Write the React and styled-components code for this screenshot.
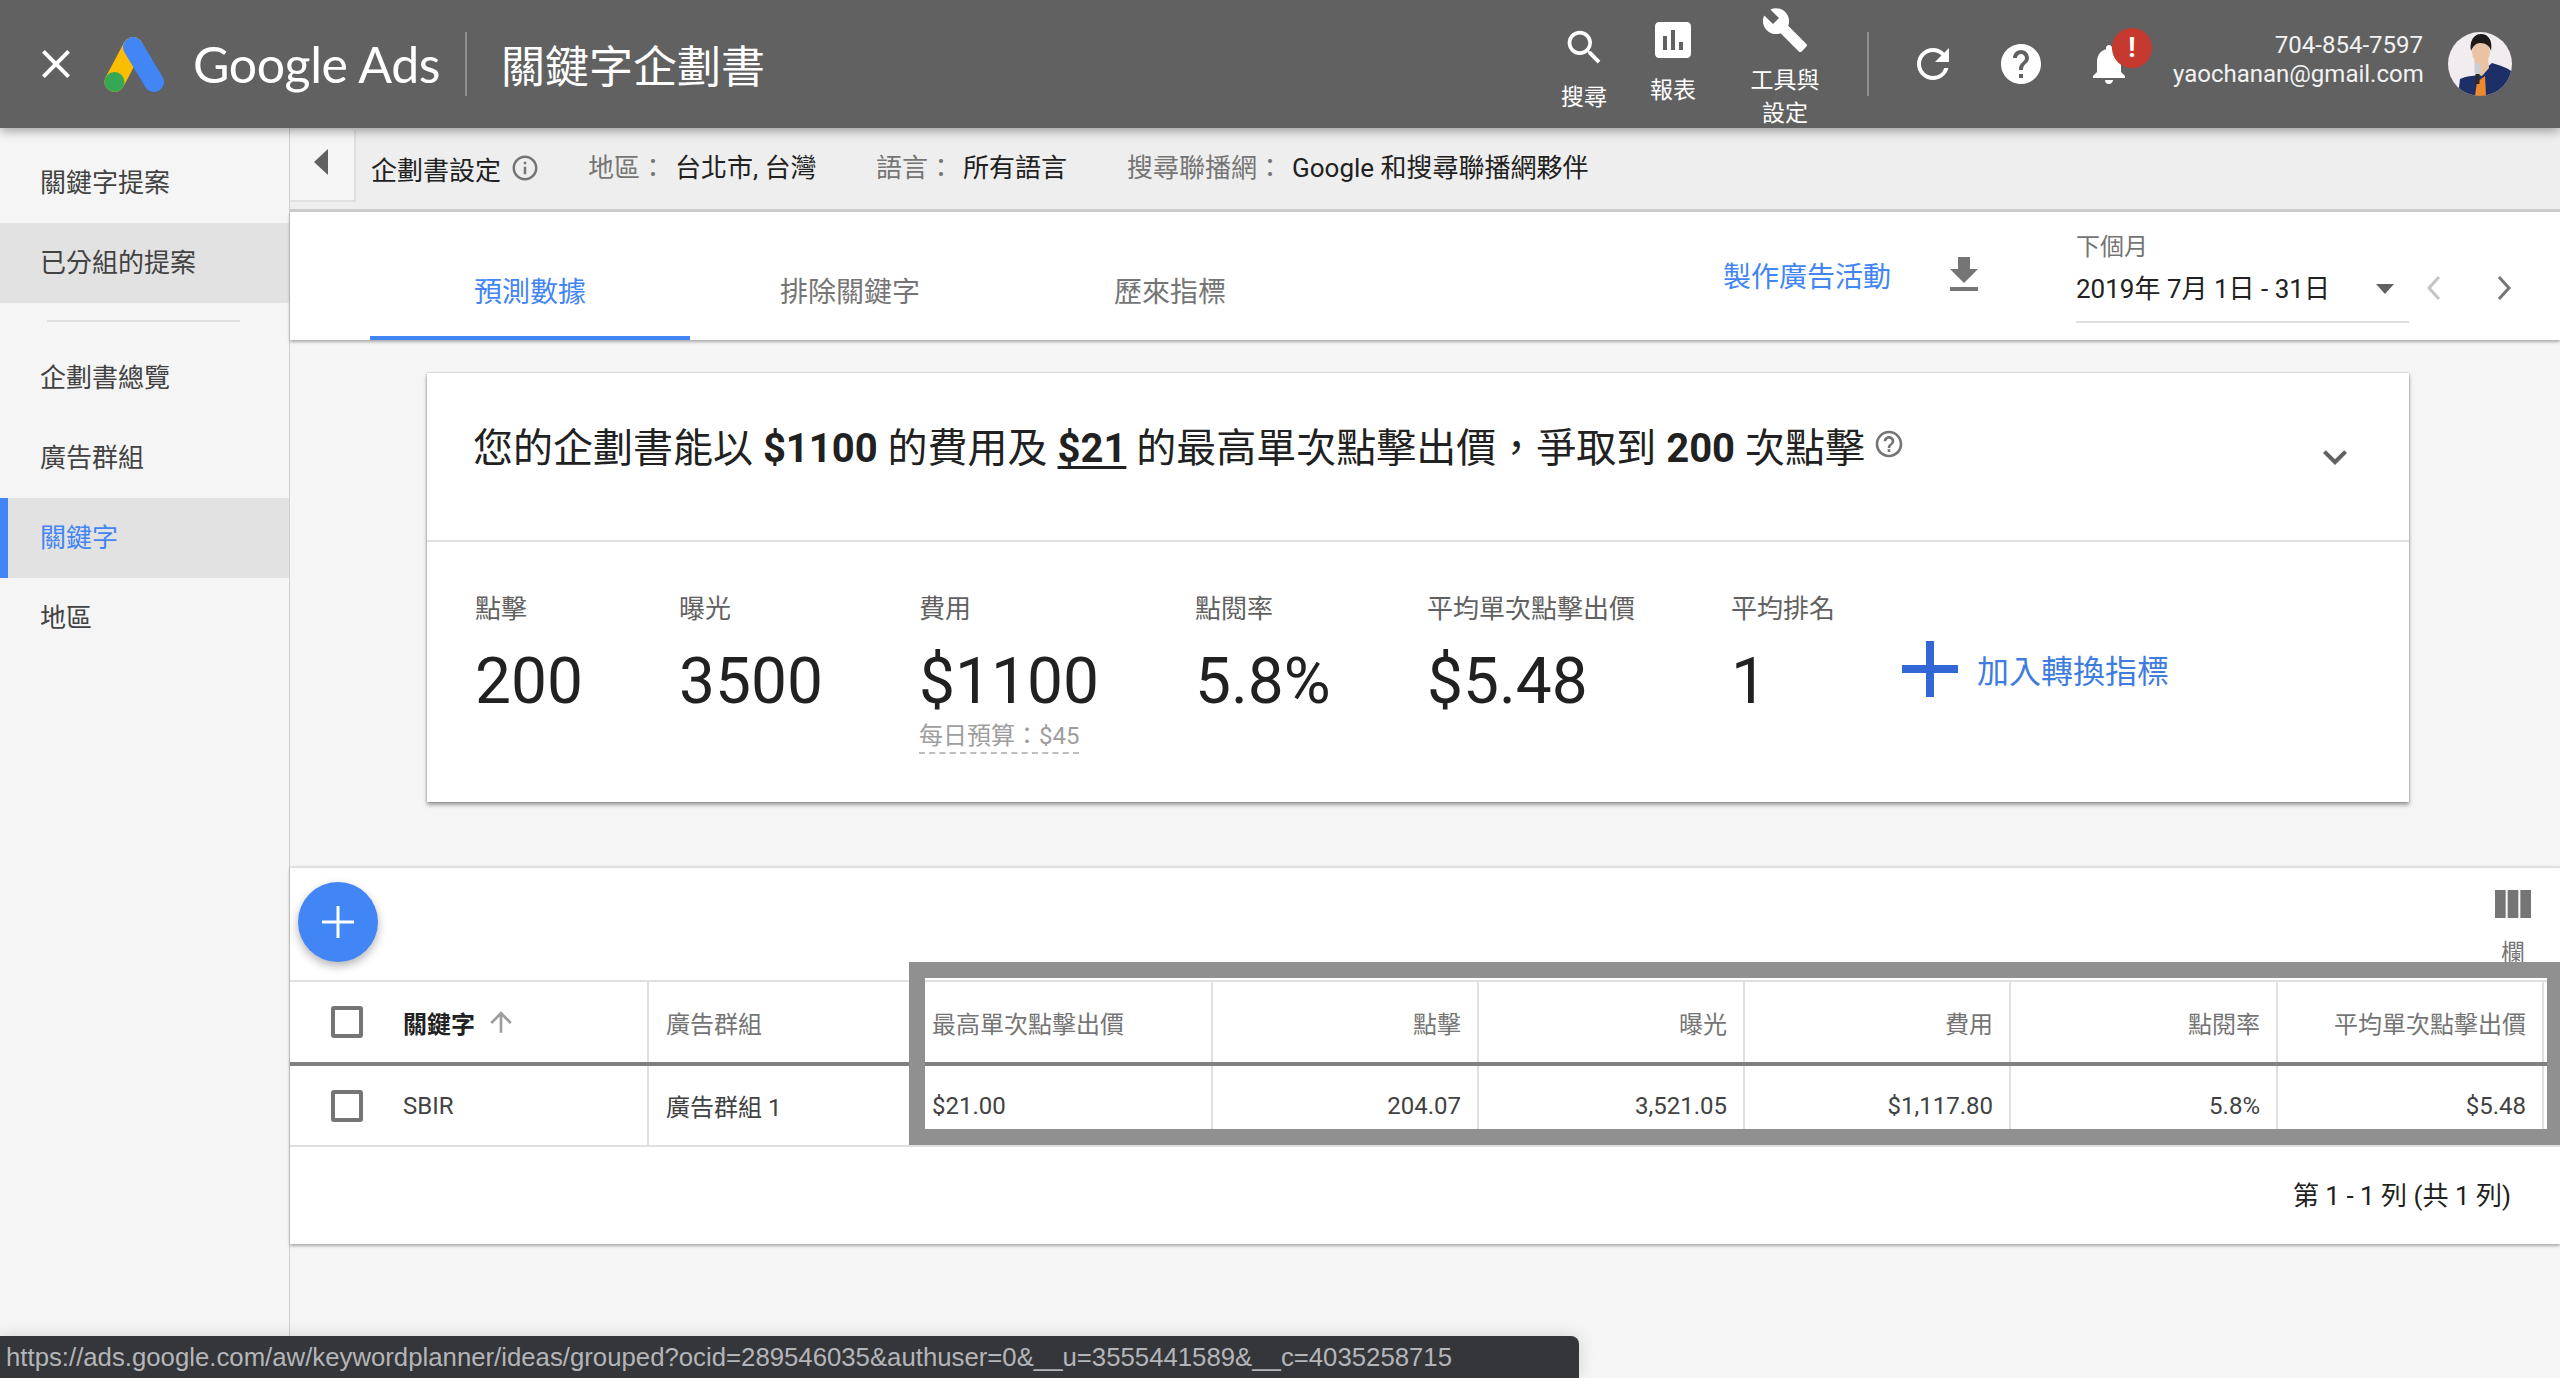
import React from 'react';
import styled, { createGlobalStyle } from 'styled-components';
import {
  MdSearch, MdAssessment, MdBuild, MdRefresh, MdHelp, MdNotifications,
  MdFileDownload, MdInfoOutline, MdHelpOutline, MdExpandMore, MdViewColumn,
  MdArrowUpward, MdClose,
} from 'react-icons/md';

const GlobalStyle = createGlobalStyle`
  html, body {
    margin: 0;
    padding: 0;
    background: #f5f5f5;
    font-family: Roboto, "Noto Sans CJK TC", sans-serif;
    color: #212121;
    overflow: hidden;
  }
  * { box-sizing: border-box; }
`;

const Page = styled.div`
  position: relative;
  width: 2560px;
  height: 1378px;
  overflow: hidden;
  display: flex;
  flex-direction: column;
`;

const Header = styled.header`
  position: relative;
  z-index: 3;
  flex: none;
  height: 128px;
  background: #616161;
  color: #fff;
  display: flex;
  align-items: center;
  box-shadow: 0 3px 10px rgba(0, 0, 0, 0.35);
`;

const CloseBtn = styled.div`
  width: 48px;
  height: 48px;
  margin-left: 32px;
  display: flex;
  align-items: center;
  justify-content: center;
  font-size: 48px;
`;

const LogoWrap = styled.div`
  margin-left: 24px;
  height: 55px;
  display: flex;
`;

const BrandText = styled.div`
  margin-left: 29px;
  width: 245px;
  font-family: Lato, Roboto, sans-serif;
  font-size: 50px;
  letter-spacing: -0.4px;
  white-space: nowrap;
  line-height: 1;
`;

const VLine = styled.div`
  flex: none;
  width: 2px;
  height: 64px;
  background: #8f8f8f;
  margin-left: ${p => p.$ml}px;
`;

const PageTitle = styled.div`
  margin-left: 34px;
  font-size: 44px;
  white-space: nowrap;
`;

const NavItem = styled.div`
  flex: none;
  align-self: flex-start;
  width: ${p => p.$w}px;
  margin-left: ${p => p.$ml || 0}px;
  padding-top: ${p => p.$top}px;
  display: flex;
  flex-direction: column;
  align-items: center;
  font-size: 23px;
  line-height: 33px;
  text-align: center;
  color: #fff;
  svg { display: block; flex: none; }
`;

const NavLabel = styled.div`
  margin-top: ${p => p.$mt || 0}px;
`;

const IconBtn = styled.div`
  position: relative;
  flex: none;
  width: 48px;
  height: 48px;
  margin-left: 40px;
  font-size: 48px;
  display: flex;
  svg { display: block; }
`;

const Badge = styled.div`
  position: absolute;
  left: 27px;
  top: -12px;
  width: 40px;
  height: 40px;
  border-radius: 50%;
  background: #c5392f;
  color: #fff;
  font-size: 27px;
  font-weight: 700;
  line-height: 40px;
  text-align: center;
`;

const Account = styled.div`
  flex: none;
  width: 250px;
  margin-left: 40px;
  padding-bottom: 9px;
  text-align: right;
  font-size: 24px;
  line-height: 29px;
  color: #f2f2f2;
  white-space: nowrap;
`;

const AvatarWrap = styled.div`
  flex: none;
  width: 64px;
  height: 64px;
  margin-left: 25px;
  border-radius: 50%;
  overflow: hidden;
  svg { display: block; }
`;

const Body = styled.div`
  flex: 1;
  display: flex;
  min-height: 0;
`;

const Sidebar = styled.aside`
  flex: none;
  width: 290px;
  padding-top: 15px;
  background: #f5f5f5;
  border-right: 1px solid #d0d0d0;
`;

const SideItem = styled.div`
  height: 80px;
  display: flex;
  align-items: center;
  padding-left: ${p => (p.$selected ? 32 : 40)}px;
  padding-bottom: 5px;
  font-size: 26px;
  color: ${p => (p.$selected ? '#4285f4' : '#424242')};
  background: ${p => (p.$selected || p.$shaded ? '#e2e2e2' : 'transparent')};
  border-left: ${p => (p.$selected ? '8px solid #4285f4' : 'none')};
`;

const SideDivider = styled.div`
  height: 2px;
  margin: 17px 49px 16px 47px;
  background: #e0e0e0;
`;

const Main = styled.main`
  flex: 1;
  min-width: 0;
  display: flex;
  flex-direction: column;
`;

const SubBar = styled.div`
  flex: none;
  height: 84px;
  padding-bottom: 6px;
  display: flex;
  align-items: center;
  background: #eeeeee;
  border-bottom: 3px solid #cccccc;
  font-size: 26px;
  white-space: nowrap;
`;

const CollapseTab = styled.div`
  flex: none;
  align-self: flex-start;
  width: 66px;
  height: 72px;
  margin-top: 2px;
  display: flex;
  align-items: center;
  padding: 0 0 6px 24px;
  background: #f5f5f5;
  border-right: 2px solid #e0e0e0;
  border-bottom: 2px solid #e0e0e0;
`;

const Triangle = styled.div`
  width: 0;
  height: 0;
  border-top: 13px solid transparent;
  border-bottom: 13px solid transparent;
  border-right: 14px solid #616161;
`;

const PlanSettings = styled.div`
  flex: none;
  width: 217px;
  margin-left: 15px;
  padding-top: 5px;
  display: flex;
  align-items: center;
  gap: 9px;
  color: #212121;
  svg { color: #757575; flex: none; }
`;

const Setting = styled.div`
  flex: none;
  width: ${p => p.$w}px;
  display: flex;
  gap: 9px;
`;

const SettingKey = styled.span`
  color: #757575;
`;

const TabBar = styled.div`
  position: relative;
  z-index: 1;
  flex: none;
  height: 128px;
  display: flex;
  background: #fff;
  box-shadow: 0 2px 3px rgba(0, 0, 0, 0.3);
`;

const Tab = styled.div`
  flex: none;
  width: 320px;
  height: 128px;
  margin-left: ${p => p.$ml || 0}px;
  padding-top: 32px;
  display: flex;
  align-items: center;
  justify-content: center;
  font-size: 28px;
  color: ${p => (p.$active ? '#4285f4' : '#757575')};
  border-bottom: 4px solid ${p => (p.$active ? '#4285f4' : 'transparent')};
`;

const CreateLink = styled.div`
  flex: none;
  margin-left: 393px;
  padding-top: 46px;
  width: 217px;
  font-size: 28px;
  line-height: 40px;
  color: #4285f4;
  white-space: nowrap;
`;

const DownloadBtn = styled.div`
  flex: none;
  width: 48px;
  margin-top: 39px;
  font-size: 48px;
  line-height: 0;
  color: #757575;
`;

const DatePicker = styled.div`
  flex: none;
  width: 333px;
  height: 111px;
  margin-left: 88px;
  padding-top: 20px;
  border-bottom: 2px solid #e0e0e0;
`;

const DateHint = styled.div`
  font-size: 24px;
  line-height: 30px;
  color: #757575;
`;

const DateValue = styled.div`
  margin-top: 9px;
  display: flex;
  align-items: center;
  justify-content: space-between;
  padding-right: 15px;
  font-size: 26px;
  line-height: 36px;
  color: #212121;
`;

const DateCaret = styled.div`
  width: 0;
  height: 0;
  border-left: 9px solid transparent;
  border-right: 9px solid transparent;
  border-top: 10px solid #616161;
`;

const Pager = styled.div`
  flex: none;
  width: 88px;
  margin: 63px 0 0 16px;
  display: flex;
  justify-content: space-between;
  align-self: flex-start;
`;

const Card = styled.section`
  flex: none;
  height: 429px;
  margin: 33px 151px 0 137px;
  background: #fff;
  box-shadow: 0 0 2px rgba(0, 0, 0, 0.3), 0 3px 4px rgba(0, 0, 0, 0.35);
`;

const CardTitleRow = styled.div`
  height: 169px;
  padding: 47px 0 0 46px;
  display: flex;
  border-bottom: 2px solid #e0e0e0;
`;

const Headline = styled.div`
  flex: none;
  width: 1400px;
  font-size: 40px;
  line-height: 58px;
  color: #212121;
  white-space: nowrap;
  b { font-weight: 700; }
  u { text-decoration-thickness: 3px; text-underline-offset: 4px; }
`;

const HeadlineHelp = styled.div`
  flex: none;
  width: 32px;
  margin-top: 8px;
  font-size: 32px;
  line-height: 0;
  color: #757575;
`;

const ExpandBtn = styled.div`
  flex: none;
  margin: 13px 0 0 406px;
  font-size: 48px;
  line-height: 0;
  color: #616161;
`;

const StatsRow = styled.div`
  display: grid;
  grid-template-columns: 204px 240px 276px 232px 304px 171px 1fr;
  padding: 51px 0 0 48px;
`;

const StatLabel = styled.div`
  font-size: 26px;
  line-height: 32px;
  color: #616161;
  white-space: nowrap;
`;

const StatValue = styled.div`
  margin-top: 17px;
  font-size: 64px;
  line-height: 80px;
  color: #212121;
  white-space: nowrap;
`;

const StatNote = styled.div`
  display: inline-block;
  margin-top: -2px;
  font-size: 24px;
  line-height: 32px;
  color: #9e9e9e;
  border-bottom: 2px dashed #bdbdbd;
  white-space: nowrap;
`;

const AddMetric = styled.div`
  margin-top: 44px;
  display: flex;
  align-items: center;
  gap: 19px;
  height: 64px;
  font-size: 32px;
  color: #3f7ce0;
  white-space: nowrap;
`;

const TableSection = styled.section`
  position: relative;
  flex: none;
  margin-top: 64px;
  background: #fff;
  border-top: 2px solid #e0e0e0;
  box-shadow: 0 2px 3px rgba(0, 0, 0, 0.3);
`;

const Toolbar = styled.div`
  height: 112px;
  padding: 14px 23px 0 8px;
  display: flex;
  justify-content: space-between;
`;

const Fab = styled.div`
  width: 80px;
  height: 80px;
  border-radius: 50%;
  background: #4285f4;
  display: flex;
  align-items: center;
  justify-content: center;
  box-shadow: 0 4px 10px rgba(0, 0, 0, 0.3);
`;

const ColumnsBtn = styled.div`
  width: 48px;
  margin-top: -2px;
  display: flex;
  flex-direction: column;
  align-items: center;
  font-size: 24px;
  line-height: 30px;
  color: #757575;
  svg { display: block; flex: none; }
`;

const ColumnsLabel = styled.div`
  margin-top: 10px;
`;

const Row = styled.div`
  display: grid;
  grid-template-columns: 359px 266px 298px 266px 266px 266px 267px 266px 1fr;
  height: ${p => p.$h}px;
  border-top: ${p => p.$top || 'none'};
  border-bottom: ${p => p.$bottom || 'none'};
  box-sizing: content-box;
`;

const Cell = styled.div`
  display: flex;
  align-items: center;
  justify-content: ${p => (p.$right ? 'flex-end' : 'flex-start')};
  padding: 0 16px 0 17px;
  font-size: 24px;
  color: ${p => (p.$head ? '#757575' : '#424242')};
  border-right: ${p => (p.$plain ? 'none' : '2px solid #e0e0e0')};
  white-space: nowrap;
`;

const KeywordCell = styled(Cell)`
  padding-left: 41px;
  gap: 40px;
`;

const Check = styled.div`
  flex: none;
  width: 32px;
  height: 32px;
  border: 4px solid #757575;
  border-radius: 3px;
`;

const KeywordHead = styled.div`
  display: flex;
  align-items: center;
  gap: 10px;
  font-weight: 700;
  color: #212121;
  svg { color: #9e9e9e; }
`;

const Footer = styled.div`
  height: 97px;
  padding: 31px 49px 0 0;
  text-align: right;
  font-size: 26px;
  line-height: 36px;
  color: #212121;
`;

const HighlightFrame = styled.div`
  position: absolute;
  left: 619px;
  right: 0;
  top: 94px;
  height: 183px;
  border-style: solid;
  border-color: #909090;
  border-width: 16px 13px 16px 16px;
`;

const StatusBar = styled.div`
  position: absolute;
  z-index: 5;
  left: 0;
  bottom: 0;
  width: 1579px;
  height: 42px;
  padding: 0 0 0 6px;
  display: flex;
  align-items: center;
  background: #35363a;
  border-top-right-radius: 8px;
  font-family: "Liberation Sans", Arial, sans-serif;
  font-size: 25.75px;
  color: #b4b5b8;
  white-space: nowrap;
  box-shadow: 0 0 16px rgba(0, 0, 0, 0.15);
`;

const AdsLogo = () => (
  <svg width="60" height="55" viewBox="0 0 60 55">
    <line x1="29" y1="10" x2="10.5" y2="45" stroke="#fbbc04" strokeWidth="20" strokeLinecap="round" />
    <circle cx="10.5" cy="45" r="10" fill="#34a853" />
    <line x1="29" y1="10" x2="50" y2="45" stroke="#4285f4" strokeWidth="20" strokeLinecap="round" />
  </svg>
);

const Avatar = () => (
  <svg width="64" height="64" viewBox="0 0 64 64">
    <rect width="64" height="64" fill="#f0ecef" />
    <path d="M10 64 L12 47 C18 44 24 44 30 43 L44 31 C50 33 58 35 63 39 L63 64 Z" fill="#1c2f66" />
    <path d="M27 64 L29 50 L37 44 L38 64 Z" fill="#ef8a2c" />
    <path d="M26 28 L40 26 L41 36 L34 44 L28 42 Z" fill="#eac3a5" />
    <ellipse cx="33" cy="20" rx="9" ry="11.5" fill="#eac3a5" />
    <path d="M23 19 C21 9 26 2 33 2 C40 2 45 8 43 19 C42 14 38 11 32 11 C28 11 25 14 23 19 Z" fill="#1d1a1a" />
    <rect x="26.5" y="31" width="6" height="11" rx="2.5" fill="#c9ced2" />
    <rect x="27.5" y="42" width="4" height="10" fill="#2a2a2a" />
  </svg>
);

const PlusIcon = ({ size, bar, color }) => (
  <svg width={size} height={size} viewBox={`0 0 ${size} ${size}`}>
    <rect x={(size - bar) / 2} y="0" width={bar} height={size} fill={color} />
    <rect x="0" y={(size - bar) / 2} width={size} height={bar} fill={color} />
  </svg>
);

const Chevron = ({ left, color }) => (
  <svg width="18" height="26" viewBox="0 0 18 26">
    <polyline
      points={left ? '14,2 4,13 14,24' : '4,2 14,13 4,24'}
      fill="none"
      stroke={color}
      strokeWidth="3"
    />
  </svg>
);

const stats = [
  { label: '點擊', value: '200' },
  { label: '曝光', value: '3500' },
  { label: '費用', value: '$1100', note: '每日預算：$45' },
  { label: '點閱率', value: '5.8%' },
  { label: '平均單次點擊出價', value: '$5.48' },
  { label: '平均排名', value: '1' },
];

const headCols = [
  { text: '最高單次點擊出價' },
  { text: '點擊', right: true },
  { text: '曝光', right: true },
  { text: '費用', right: true },
  { text: '點閱率', right: true },
  { text: '平均單次點擊出價', right: true },
];

const dataCols = [
  { text: '$21.00' },
  { text: '204.07', right: true },
  { text: '3,521.05', right: true },
  { text: '$1,117.80', right: true },
  { text: '5.8%', right: true },
  { text: '$5.48', right: true },
];

const App = () => (
  <Page>
    <GlobalStyle />
    <Header>
      <CloseBtn><MdClose /></CloseBtn>
      <LogoWrap><AdsLogo /></LogoWrap>
      <BrandText>Google Ads</BrandText>
      <VLine $ml={27} />
      <PageTitle>關鍵字企劃書</PageTitle>
      <NavItem $w={74} $ml={782} $top={25}>
        <MdSearch size={45} />
        <NavLabel $mt={11}>搜尋</NavLabel>
      </NavItem>
      <NavItem $w={104} $top={16}>
        <MdAssessment size={48} />
        <NavLabel $mt={10}>報表</NavLabel>
      </NavItem>
      <NavItem $w={120} $top={6}>
        <MdBuild size={48} />
        <NavLabel $mt={10}>工具與<br />設定</NavLabel>
      </NavItem>
      <VLine $ml={22} />
      <IconBtn><MdRefresh /></IconBtn>
      <IconBtn><MdHelp /></IconBtn>
      <IconBtn>
        <MdNotifications />
        <Badge>!</Badge>
      </IconBtn>
      <Account>704-854-7597<br />yaochanan@gmail.com</Account>
      <AvatarWrap><Avatar /></AvatarWrap>
    </Header>
    <Body>
      <Sidebar>
        <SideItem>關鍵字提案</SideItem>
        <SideItem $shaded>已分組的提案</SideItem>
        <SideDivider />
        <SideItem>企劃書總覽</SideItem>
        <SideItem>廣告群組</SideItem>
        <SideItem $selected>關鍵字</SideItem>
        <SideItem>地區</SideItem>
      </Sidebar>
      <Main>
        <SubBar>
          <CollapseTab><Triangle /></CollapseTab>
          <PlanSettings>企劃書設定 <MdInfoOutline size={30} /></PlanSettings>
          <Setting $w={288}><SettingKey>地區：</SettingKey>台北市, 台灣</Setting>
          <Setting $w={251}><SettingKey>語言：</SettingKey>所有語言</Setting>
          <Setting><SettingKey>搜尋聯播網：</SettingKey>Google 和搜尋聯播網夥伴</Setting>
        </SubBar>
        <TabBar>
          <Tab $active $ml={80}>預測數據</Tab>
          <Tab>排除關鍵字</Tab>
          <Tab>歷來指標</Tab>
          <CreateLink>製作廣告活動</CreateLink>
          <DownloadBtn><MdFileDownload /></DownloadBtn>
          <DatePicker>
            <DateHint>下個月</DateHint>
            <DateValue>2019年 7月 1日 - 31日<DateCaret /></DateValue>
          </DatePicker>
          <Pager>
            <Chevron left color="#c4c4c4" />
            <Chevron color="#757575" />
          </Pager>
        </TabBar>
        <Card>
          <CardTitleRow>
            <Headline>
              您的企劃書能以 <b>$1100</b> 的費用及 <b><u>$21</u></b> 的最高單次點擊出價，爭取到 <b>200</b> 次點擊
            </Headline>
            <HeadlineHelp><MdHelpOutline /></HeadlineHelp>
            <ExpandBtn><MdExpandMore /></ExpandBtn>
          </CardTitleRow>
          <StatsRow>
            {stats.map(s => (
              <div key={s.label}>
                <StatLabel>{s.label}</StatLabel>
                <StatValue>{s.value}</StatValue>
                {s.note && <StatNote>{s.note}</StatNote>}
              </div>
            ))}
            <AddMetric>
              <PlusIcon size={56} bar={8} color="#3367d6" />
              加入轉換指標
            </AddMetric>
          </StatsRow>
        </Card>
        <TableSection>
          <Toolbar>
            <Fab><PlusIcon size={32} bar={3} color="#fff" /></Fab>
            <ColumnsBtn>
              <MdViewColumn size={48} />
              <ColumnsLabel>欄</ColumnsLabel>
            </ColumnsBtn>
          </Toolbar>
          <Row $h={80} $top="2px solid #e0e0e0" $bottom="4px solid #808080">
            <KeywordCell>
              <Check />
              <KeywordHead>關鍵字 <MdArrowUpward size={32} /></KeywordHead>
            </KeywordCell>
            <Cell $head>廣告群組</Cell>
            {headCols.map(c => (
              <Cell key={c.text + c.right} $head $right={c.right}>{c.text}</Cell>
            ))}
            <Cell $plain />
          </Row>
          <Row $h={79} $bottom="2px solid #e0e0e0">
            <KeywordCell>
              <Check />
              SBIR
            </KeywordCell>
            <Cell>廣告群組 1</Cell>
            {dataCols.map(c => (
              <Cell key={c.text + c.right} $right={c.right}>{c.text}</Cell>
            ))}
            <Cell $plain />
          </Row>
          <Footer>第 1 - 1 列 (共 1 列)</Footer>
          <HighlightFrame />
        </TableSection>
      </Main>
    </Body>
    <StatusBar>https://ads.google.com/aw/keywordplanner/ideas/grouped?ocid=289546035&amp;authuser=0&amp;__u=3555441589&amp;__c=4035258715</StatusBar>
  </Page>
);

export default App;
